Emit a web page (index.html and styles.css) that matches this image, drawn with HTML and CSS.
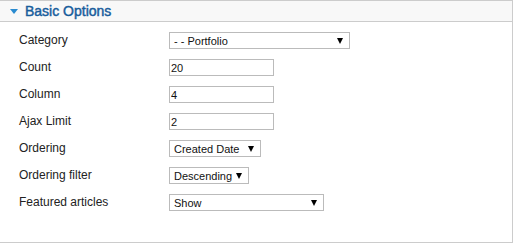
FILE: index.html
```html
<!DOCTYPE html>
<html lang="en">
<head>
  <meta charset="UTF-8" />
  <title>Basic Options</title>
  <link rel="stylesheet" href="styles.css">
</head>
<body>

  <div class="panel">
    <div class="panel-head">
      <span class="toggle"></span>
      <h3>Basic Options</h3>
    </div>

    <form class="options">
      <label for="category">Category</label>
      <span class="pick pick-category">
        <select id="category"><option>- - Portfolio</option></select>
      </span>

      <label for="count">Count</label>
      <input type="text" id="count" value="20" />

      <label for="column">Column</label>
      <input type="text" id="column" value="4" />

      <label for="limit">Ajax Limit</label>
      <input type="text" id="limit" value="2" />

      <label for="ordering">Ordering</label>
      <span class="pick pick-ordering">
        <select id="ordering"><option>Created Date</option></select>
      </span>

      <label for="filter">Ordering filter</label>
      <span class="pick pick-filter">
        <select id="filter"><option>Descending</option></select>
      </span>

      <label for="featured">Featured articles</label>
      <span class="pick pick-featured">
        <select id="featured"><option>Show</option></select>
      </span>
    </form>
  </div>

</body>
</html>
```

FILE: styles.css
```css
* {
  box-sizing: border-box;
  margin: 0;
  padding: 0;
}

body {
  font-family: "Liberation Sans", Arial, sans-serif;
  background: #fff;
  color: #333;
}

.panel {
  width: 513px;
  height: 243px;
  border: 1px solid #ccc;
  border-left: none;
}

.panel-head {
  display: flex;
  align-items: center;
  height: 21px;
  background: #f8f8f8;
  border-bottom: 1px solid #ccc;
  padding-left: 10px;
}

.toggle {
  width: 0;
  height: 0;
  border-left: 4px solid transparent;
  border-right: 4px solid transparent;
  border-top: 5px solid #2a8bd0;
  margin-right: 7px;
}

.panel-head h3 {
  font-size: 14px;
  font-weight: normal;
  color: #185d9c;
  -webkit-text-stroke: 0.45px #185d9c;
}

.options {
  display: grid;
  grid-template-columns: 150px auto;
  grid-auto-rows: 17px;
  justify-items: start;
  align-items: center;
  row-gap: 10px;
  padding: 10px 0 0 19px;
}

.options label {
  font-size: 12px;
  line-height: 17px;
  color: #222;
}

.options input,
.options select {
  display: block;
  font-family: inherit;
  font-size: 11px;
  color: #111;
  height: 17px;
  border: 1px solid #bbb;
  background: #fff;
  outline: none;
}

.options input {
  width: 105px;
  padding: 0 1px;
}

.pick {
  position: relative;
  display: block;
  height: 17px;
}

.pick select {
  appearance: none;
  -webkit-appearance: none;
  width: 100%;
  padding: 0 0 0 4px;
}

.pick::after {
  content: "";
  position: absolute;
  right: 7px;
  top: 6px;
  border-left: 3.5px solid transparent;
  border-right: 3.5px solid transparent;
  border-top: 6px solid #000;
  pointer-events: none;
}

.pick-category { width: 181px; }
.pick-ordering { width: 92px; }
.pick-filter { width: 80px; }
.pick-featured { width: 155px; }
```
